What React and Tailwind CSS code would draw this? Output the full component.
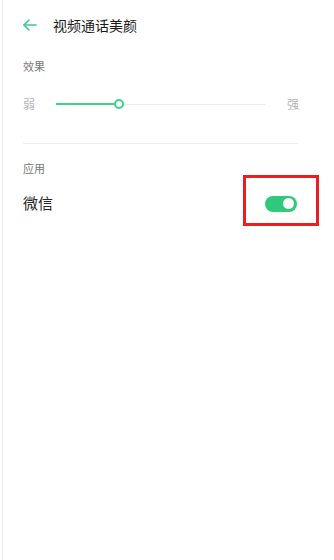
import { useState } from 'react';

const FONT = { fontFamily: '"Noto Sans CJK SC", "Noto Sans", sans-serif' };

const BackArrow = () => (
  <svg width="16" height="16" viewBox="0 0 16 16" fill="none" stroke="#3cc98a" strokeWidth="1.6" strokeLinecap="round" strokeLinejoin="round">
    <path d="M2 8h12" />
    <path d="M7 3L2 8l5 5" />
  </svg>
);

const Slider = ({ value }) => (
  <div className="relative flex-1 h-[12px] flex items-center">
    <div className="w-full h-px bg-[#ebebeb]" />
    <div className="absolute left-0 h-[2px] bg-[#3dd48a]" style={{ width: value }} />
    <div
      className="absolute w-[10px] h-[10px] rounded-full border-2 border-[#3dd48a] bg-white"
      style={{ left: value - 5 }}
    />
  </div>
);

const Toggle = ({ on, onChange }) => (
  <button
    onClick={() => onChange(!on)}
    className={`w-[32px] h-[16px] rounded-full flex items-center px-[3px] ${on ? 'bg-[#2ec97a] justify-end' : 'bg-[#d6d6d6] justify-start'}`}
  >
    <span className="block w-[11px] h-[11px] rounded-full bg-white" />
  </button>
);

export default function App() {
  const [wechat, setWechat] = useState(true);

  return (
    <div className="w-[334px] h-[560px] bg-white overflow-hidden" style={FONT}>
      <div className="ml-[2px] h-full border-l border-[#ededed] flex flex-col">
        {/* Header */}
        <div className="h-[50px] flex items-center pl-[19px]">
          <BackArrow />
          <span className="ml-[15px] text-[14px] leading-none text-[#1a1a1a]">视频通话美颜</span>
        </div>

        <div className="pl-[20px] pr-[36px] flex flex-col">
          {/* 效果 */}
          <div className="mt-[8px] h-[16px] flex items-center text-[11px] text-[#777]">效果</div>
          <div className="mt-[18px] h-[24px] flex items-center">
            <span className="w-[12px] text-[12px] leading-none text-[#b3b3b3]">弱</span>
            <div className="ml-[21px] flex-1 flex">
              <Slider value={63} />
            </div>
            <span className="ml-[22px] w-[11px] text-[12px] leading-none text-[#b3b3b3]">强</span>
          </div>

          <div className="mt-[27px] h-px bg-[#efefef]" />

          {/* 应用 */}
          <div className="mt-[17px] h-[14px] flex items-center text-[11px] text-[#777]">应用</div>
          <div className="h-[51px] flex items-center justify-between">
            <span className="text-[15px] leading-none text-[#262626] mt-[3px]">微信</span>
            <div className="-mr-[21px] w-[76px] h-[51px] border-[3px] border-[#ec1c24] flex items-center justify-center pt-[6px]">
              <Toggle on={wechat} onChange={setWechat} />
            </div>
          </div>
        </div>
      </div>
    </div>
  );
}
